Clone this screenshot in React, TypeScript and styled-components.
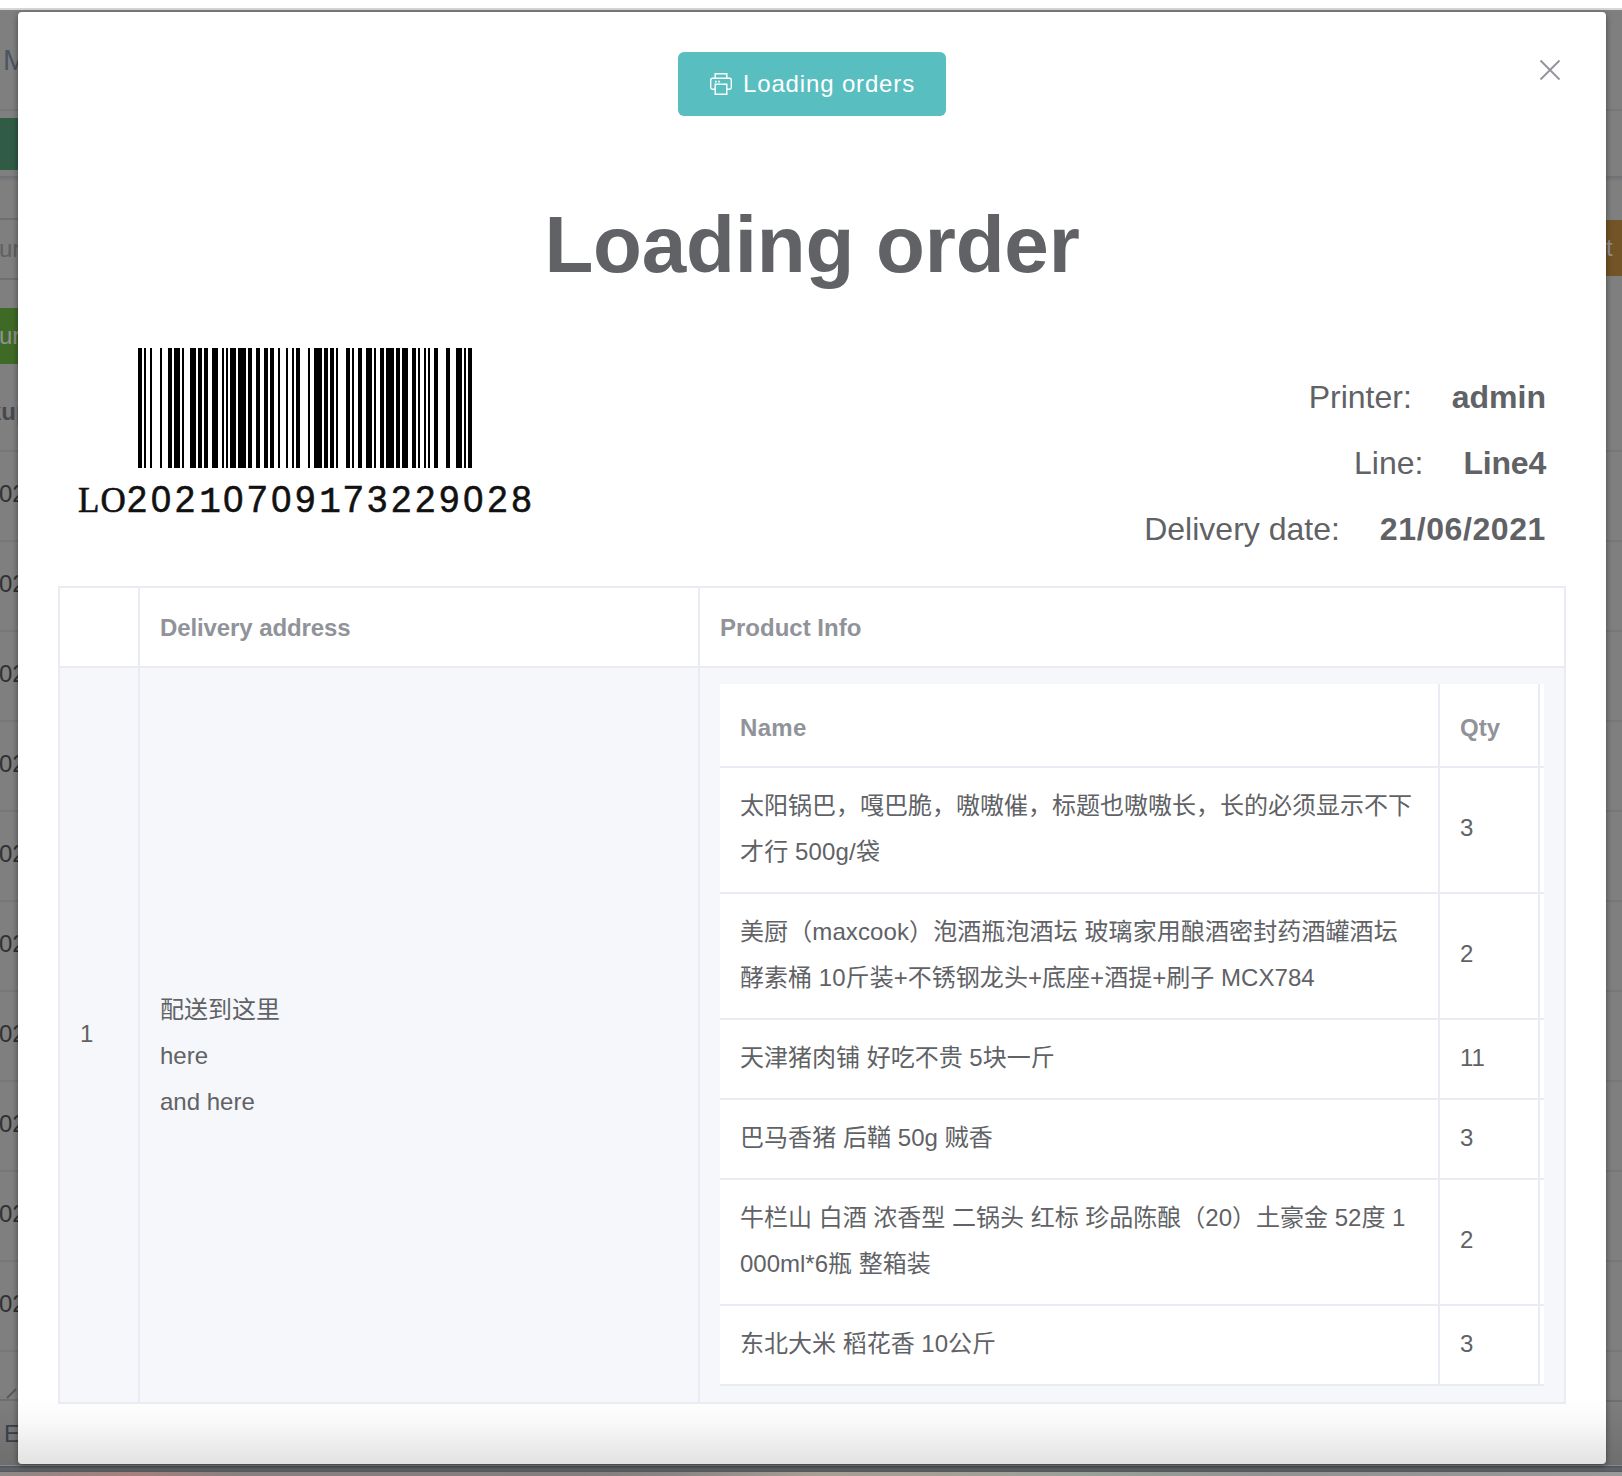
import React from "react";
import styled, { createGlobalStyle, css } from "styled-components";

const Global = createGlobalStyle`
  * { box-sizing: border-box; }
  body {
    margin: 0;
    overflow: hidden;
    color: #606266;
    font-family: "Liberation Sans", "Noto Sans CJK SC", sans-serif;
  }
`;

const Fit = styled.span<{ $ls?: number }>`
  letter-spacing: ${(p) => p.$ls ?? 0}px;
  white-space: nowrap;
`;

const Screen = styled.div`
  width: 1622px;
  height: 1476px;
  position: relative;
  overflow: hidden;
  display: flex;
  flex-direction: column;
  background: #7f7f7f;
`;

const TopStrip = styled.div`
  height: 10px;
  flex: none;
  background: #fff;
  border-bottom: 2px solid #d7d7dc;
`;

const Backdrop = styled.div`
  flex: 1;
  display: flex;
  justify-content: space-between;
  min-height: 0;
  background: linear-gradient(#7f7f7f 0, #7f7f7f 1385px, #6e6e6e 100%);
`;

const Edge = styled.div<{ $right?: boolean }>`
  width: 18px;
  overflow: hidden;
  display: flex;
  flex-direction: column;
  ${(p) => p.$right && css`width: 16px;`}
`;

const EdgeCell = styled.div<{
  $h: number;
  $bg?: string;
  $line?: string;
  $color?: string;
  $size?: number;
  $bold?: boolean;
  $shift?: number;
  $drop?: number;
  $lift?: number;
}>`
  flex: none;
  height: ${(p) => p.$h}px;
  background: ${(p) => p.$bg ?? "transparent"};
  border-bottom: ${(p) => (p.$line ? `2px solid ${p.$line}` : "none")};
  color: ${(p) => p.$color ?? "#303133"};
  font-size: ${(p) => p.$size ?? 24}px;
  font-weight: ${(p) => (p.$bold ? 700 : 400)};
  display: flex;
  align-items: center;
  white-space: nowrap;
  text-indent: ${(p) => p.$shift ?? -1}px;
  padding-top: ${(p) => p.$drop ?? 0}px;
  padding-bottom: ${(p) => p.$lift ?? 0}px;
`;

const ShadowCell = styled(EdgeCell)`
  background: linear-gradient(#707075, #7f7f7f);
`;

const ResizeMark = styled.svg`
  flex: none;
  margin: 34px 0 0 6px;
`;

const BottomStrip = styled.div`
  flex: none;
  height: 11px;
  display: flex;
  flex-direction: column;
  border-top: 1px solid #85878a;
  background: linear-gradient(#505358, #62666c 3px, #55575b 6px);
`;

const DockEdge = styled.div`
  height: 4px;
  margin-top: auto;
  background: linear-gradient(
    90deg, #8e8886 0, #a8807d 8%, #888080 15%, #857e7e 36%, #8c8786 42%,
    #a89e94 50%, #a5a096 58%, #9aa199 67%, #939393 78%, #999 100%
  );
`;

const Dialog = styled.section`
  position: absolute;
  left: 18px;
  top: 12px;
  width: 1588px;
  height: 1452px;
  border-radius: 4px;
  padding: 40px;
  background: linear-gradient(#fff 0, #fff 1385px, #fafafa 1408px, #e2e2e2 100%);
  box-shadow: 0 2px 6px rgba(0, 0, 0, 0.45);
  display: flex;
  flex-direction: column;
`;

const Close = styled.button`
  position: absolute;
  right: 45px;
  top: 47px;
  width: 22px;
  height: 22px;
  padding: 0;
  border: 0;
  background: none;
  display: flex;
`;

const PrintButton = styled.button`
  flex: none;
  align-self: center;
  width: 268px;
  height: 64px;
  border: 0;
  border-radius: 6px;
  background: #58bec0;
  color: #fff;
  font: 24px "Liberation Sans", sans-serif;
  display: flex;
  align-items: center;
  gap: 11px;
  padding: 0 0 0 32px;
`;

const Title = styled.h1`
  flex: none;
  margin: 78px 0 4px;
  height: 102px;
  line-height: 102px;
  text-align: center;
  font-size: 80px;
  font-weight: 700;
`;

const Summary = styled.div`
  flex: none;
  height: 286px;
  display: flex;
  justify-content: space-between;
`;

const BarcodeBlock = styled.div`
  width: 480px;
  padding: 48px 0 0 20px;
`;

const Bars = styled.svg`
  display: block;
  margin-left: 60px;
`;

const BarcodeText = styled.div`
  margin-top: 12px;
  height: 40px;
  font: 36px/40px "Liberation Sans", sans-serif;
  letter-spacing: 4px;
  color: #111;
  -webkit-text-stroke: 0.6px #111;
  white-space: nowrap;
`;

const SerifPair = styled.span`
  font-family: "Liberation Serif", serif;
  font-size: 35px;
  letter-spacing: 1.2px;
`;

const SlabOne = styled.span`
  font-family: "Liberation Mono", monospace;
  letter-spacing: 2.4px;
`;

const Facts = styled.dl`
  margin: 0;
  padding: 64px 20px 0 0;
`;

const Fact = styled.div`
  height: 66px;
  line-height: 66px;
  display: flex;
  justify-content: flex-end;
  gap: 40px;
  font-size: 32px;
`;

const Term = styled.dt``;
const Detail = styled.dd`
  margin: 0;
  font-weight: 700;
`;

const line = "2px solid #ebecf3";

const Grid = styled.div`
  flex: none;
  width: 1508px;
  border-top: ${line};
  border-left: ${line};
  display: grid;
  grid-template-columns: 80px 560px 866px;
  grid-template-rows: 80px 736px;
`;

const Cell = styled.div<{ $head?: boolean; $drop?: number }>`
  border-right: ${line};
  border-bottom: ${line};
  padding: ${(p) => p.$drop ?? 0}px 20px 0;
  display: flex;
  flex-direction: column;
  justify-content: center;
  font-size: 24px;
  line-height: 46px;
  background: ${(p) => (p.$head ? "transparent" : "#f5f7fb")};
  color: ${(p) => (p.$head ? "#909399" : "#606266")};
  font-weight: ${(p) => (p.$head ? 700 : 400)};
`;

const IndexCell = styled(Cell)`
  padding-bottom: 2px;
`;

const ProductCell = styled(Cell)`
  justify-content: flex-start;
  padding-top: 16px;
`;

const Products = styled.div`
  width: 824px;
  background: #fff;
`;

const ProductRow = styled.div<{ $h: number; $head?: boolean }>`
  height: ${(p) => p.$h}px;
  border-bottom: ${line};
  display: grid;
  grid-template-columns: 720px 100px;
  font-weight: ${(p) => (p.$head ? 700 : 400)};
  color: ${(p) => (p.$head ? "#909399" : "#606266")};
`;

const ProductName = styled.div<{ $drop?: number; $lift?: number }>`
  border-right: ${line};
  padding: ${(p) => p.$drop ?? 0}px 0 ${(p) => p.$lift ?? 0}px 20px;
  display: flex;
  flex-direction: column;
  justify-content: center;
`;

const Qty = styled(ProductName)``;

const WIDTHS = [
  "211214", "132131", "133121", "223211", "113141", "222221", "221312", "112412",
  "412121", "142112", "223112", "214121", "322112", "111224", "2331112",
];

// Code 128: widths alternate bar / space, two pixels to a module.
const barRects = (() => {
  const out: { x: number; w: number }[] = [];
  let x = 0;
  for (const symbol of WIDTHS)
    [...symbol].forEach((d, i) => {
      const w = Number(d) * 2;
      if (i % 2 === 0) out.push({ x, w });
      x += w;
    });
  return out;
})();

const PrinterIcon = () => (
  <svg width="22" height="22" viewBox="0 0 22 22" fill="none" stroke="#fff" strokeWidth="1.4">
    <path d="M5.2 5.2V.7h11.6v4.5M5.2 16.3H2.4A1.7 1.7 0 0 1 .7 14.6V6.9a1.7 1.7 0 0 1 1.7-1.7h17.2a1.7 1.7 0 0 1 1.7 1.7v7.7a1.7 1.7 0 0 1-1.7 1.7h-2.8M5.2 11.2h11.6v10.1H5.2z" />
    <path d="M5 8.6h1.6M8.2 8.6h1.6" strokeWidth="1.6" />
  </svg>
);

const orderCode = "20210709173229028";

const products: { h: number; qty: string; lines: [string, number][] }[] = [
  { h: 126, qty: "3", lines: [["太阳锅巴，嘎巴脆，嗷嗷催，标题也嗷嗷长，长的必须显示不下", 0], ["才行 500g/袋", 0.15]] },
  { h: 126, qty: "2", lines: [["美厨（maxcook）泡酒瓶泡酒坛 玻璃家用酿酒密封药酒罐酒坛", 0.1], ["酵素桶 10斤装+不锈钢龙头+底座+酒提+刷子 MCX784", 0.04]] },
  { h: 80, qty: "11", lines: [["天津猪肉铺 好吃不贵 5块一斤", 0]] },
  { h: 80, qty: "3", lines: [["巴马香猪 后鞧 50g 贼香", 0.05]] },
  { h: 126, qty: "2", lines: [["牛栏山 白酒 浓香型 二锅头 红标 珍品陈酿（20）土豪金 52度 1", 0], ["000ml*6瓶 整箱装", 0]] },
  { h: 80, qty: "3", lines: [["东北大米 稻花香 10公斤", 0]] },
];

const ROW = "#76767b";

export default function App() {
  return (
    <>
      <Global />
      <Screen>
        <TopStrip />
        <Backdrop>
          <Edge>
            <EdgeCell $h={101} $line="#777" $color="#4b5563" $size={29} $shift={3} $drop={2}>M</EdgeCell>
            <EdgeCell $h={7} />
            <EdgeCell $h={52} $bg="#305c46" />
            <EdgeCell $h={6} />
            <ShadowCell $h={6} />
            <EdgeCell $h={38} $line="#6e6e74" />
            <EdgeCell $h={60} $line="#6e6e74" $color="#5f6063">ur</EdgeCell>
            <EdgeCell $h={28} />
            <EdgeCell $h={56} $bg="#3f6a25" $color="#929292">ur</EdgeCell>
            <EdgeCell $h={88} $line={ROW} $color="#48494c" $bold $drop={10} $shift={-12}>kup</EdgeCell>
            {Array.from({ length: 10 }, (_, i) => (
              <EdgeCell key={i} $h={90} $line={ROW} $lift={4}>02</EdgeCell>
            ))}
            <EdgeCell $h={49} $line="#6e6e72">
              <ResizeMark width="12" height="12" viewBox="0 0 12 12" stroke="#58595c" strokeWidth="2">
                <path d="M1 11L10 2" />
              </ResizeMark>
            </EdgeCell>
            <EdgeCell $h={64} $color="#38404a" $shift={4} $drop={2}>E</EdgeCell>
          </Edge>
          <Edge $right>
            <EdgeCell $h={101} $line="#777" />
            <EdgeCell $h={65} />
            <ShadowCell $h={6} />
            <EdgeCell $h={38} />
            <EdgeCell $h={56} $bg="#735426" $color="#929292" $shift={0}>t</EdgeCell>
            <EdgeCell $h={176} $line={ROW} />
            {Array.from({ length: 10 }, (_, i) => (
              <EdgeCell key={i} $h={90} $line={ROW} />
            ))}
            <EdgeCell $h={50} $line="#6e6e72" />
          </Edge>
        </Backdrop>
        <BottomStrip><DockEdge /></BottomStrip>
        <Dialog>
          <Close aria-label="Close">
            <svg width="22" height="22" viewBox="0 0 22 22" stroke="#909399" strokeWidth="1.8">
              <path d="M1.5 1.5L20.5 20.5M20.5 1.5L1.5 20.5" />
            </svg>
          </Close>
          <PrintButton>
            <PrinterIcon />
            <Fit $ls={0.85}>Loading orders</Fit>
          </PrintButton>
          <Title><Fit $ls={-0.2}>Loading order</Fit></Title>
          <Summary>
            <BarcodeBlock>
              <Bars width="334" height="120" viewBox="0 0 334 120">
                {barRects.map((b) => <rect key={b.x} x={b.x} width={b.w} height="120" />)}
              </Bars>
              <BarcodeText>
                <SerifPair>LO</SerifPair>
                {orderCode.split(/(1)/).map((part, i) => (part === "1" ? <SlabOne key={i}>1</SlabOne> : part))}
              </BarcodeText>
            </BarcodeBlock>
            <Facts>
              <Fact><Term>Printer:</Term><Detail>admin</Detail></Fact>
              <Fact><Term>Line:</Term><Detail><Fit $ls={-0.2}>Line4</Fit></Detail></Fact>
              <Fact><Term>Delivery date:</Term><Detail><Fit $ls={0.6}>21/06/2021</Fit></Detail></Fact>
            </Facts>
          </Summary>
          <Grid>
            <Cell $head />
            <Cell $head $drop={2}><Fit $ls={-0.1}>Delivery address</Fit></Cell>
            <Cell $head $drop={2}>Product Info</Cell>
            <IndexCell>1</IndexCell>
            <Cell $drop={42}>
              <div>配送到这里</div>
              <div>here</div>
              <div>and here</div>
            </Cell>
            <ProductCell>
              <Products>
                <ProductRow $h={84} $head>
                  <ProductName $drop={6}><Fit $ls={0.3}>Name</Fit></ProductName>
                  <Qty $drop={6}>Qty</Qty>
                </ProductRow>
                {products.map((p, i) => (
                  <ProductRow key={i} $h={p.h}>
                    <ProductName $lift={2}>
                      {p.lines.map(([t, ls]) => <Fit key={t} $ls={ls}>{t}</Fit>)}
                    </ProductName>
                    <Qty $lift={p.lines.length > 1 ? 4 : 2}>{p.qty}</Qty>
                  </ProductRow>
                ))}
              </Products>
            </ProductCell>
          </Grid>
        </Dialog>
      </Screen>
    </>
  );
}
